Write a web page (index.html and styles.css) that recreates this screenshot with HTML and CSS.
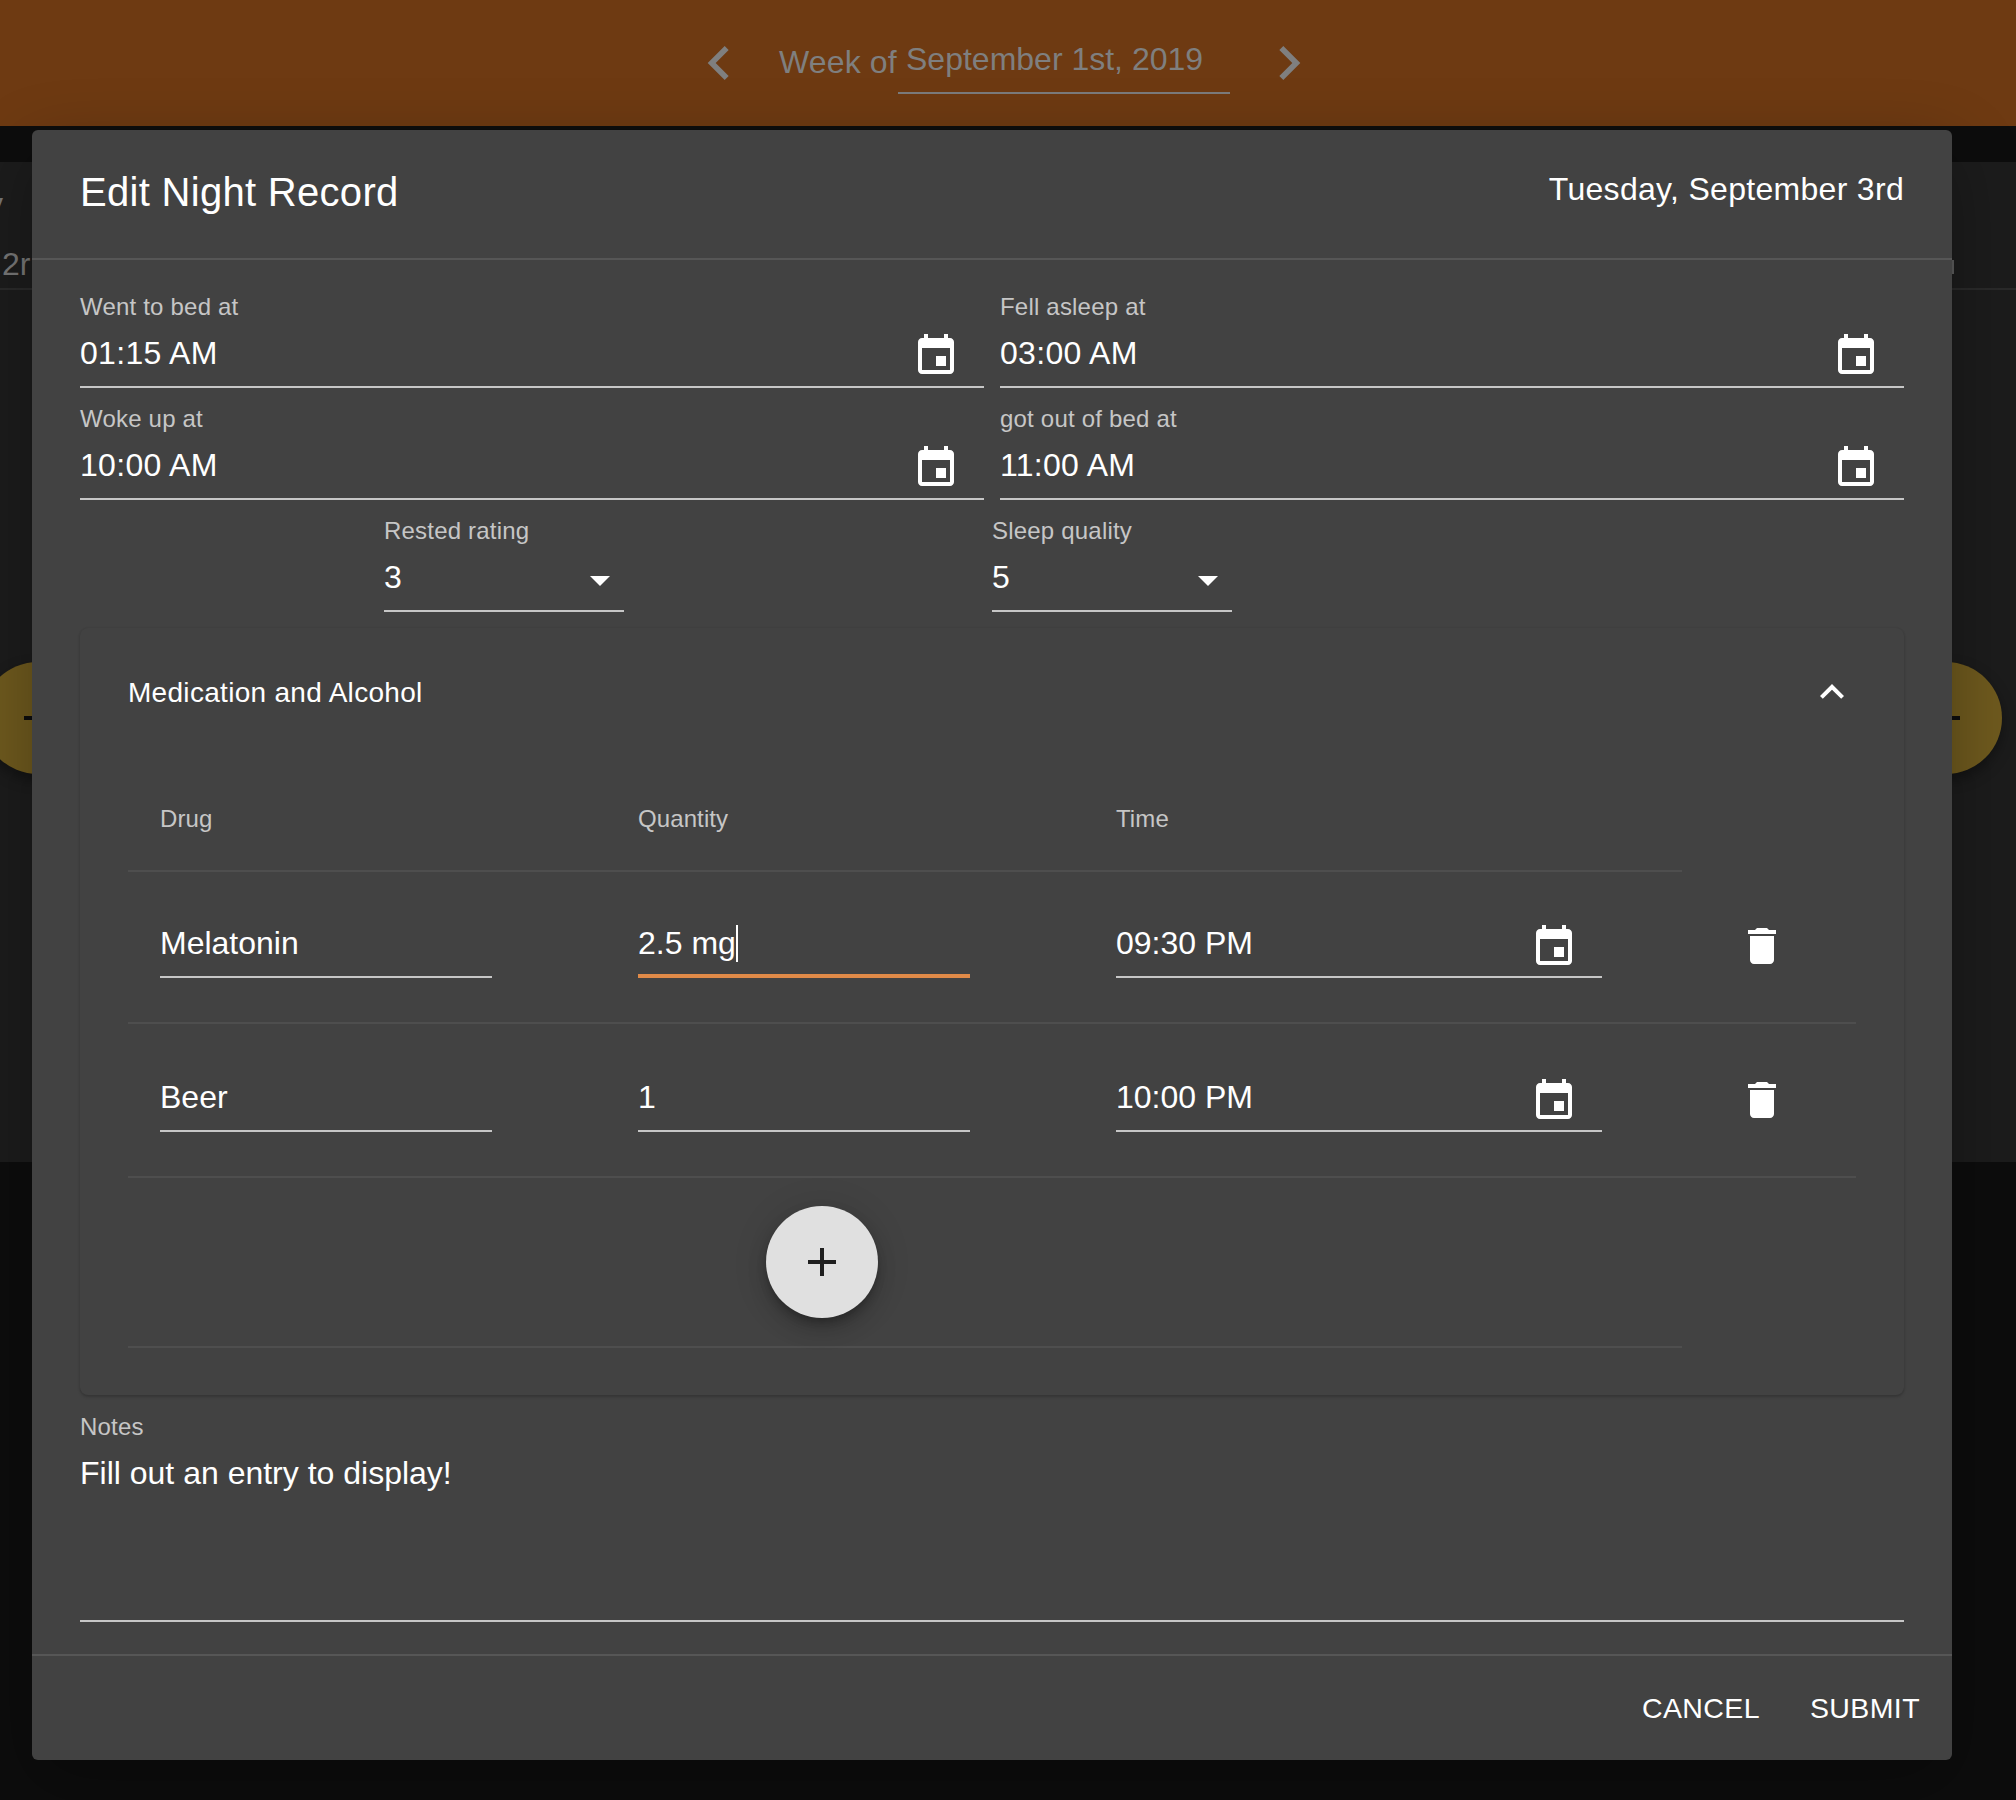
FILE: index.html
```html
<!DOCTYPE html>
<html lang="en">
<head>
<meta charset="utf-8">
<title>Edit Night Record</title>
<link rel="stylesheet" href="styles.css">
</head>
<body>
<svg class="sprite" width="0" height="0" aria-hidden="true">
  <symbol id="i-event" viewBox="0 0 24 24"><path d="M17 12h-5v5h5v-5zM16 1v2H8V1H6v2H5c-1.11 0-1.99.9-1.99 2L3 19c0 1.1.89 2 2 2h14c1.1 0 2-.9 2-2V5c0-1.1-.9-2-2-2h-1V1h-2zm3 18H5V8h14v11z"/></symbol>
  <symbol id="i-delete" viewBox="0 0 24 24"><path d="M6 19c0 1.1.9 2 2 2h8c1.1 0 2-.9 2-2V7H6v12zM19 4h-3.5l-1-1h-5l-1 1H5v2h14V4z"/></symbol>
  <symbol id="i-drop" viewBox="0 0 24 24"><path d="M7 10l5 5 5-5z"/></symbol>
  <symbol id="i-add" viewBox="0 0 24 24"><path d="M19 13h-6v6h-2v-6H5v-2h6V5h2v6h6v2z"/></symbol>
</svg>

<header class="topbar">
  <svg class="nav-icon" viewBox="0 0 24 24"><path d="M15.41 7.41L14 6l-6 6 6 6 1.41-1.41L10.83 12z"/></svg>
  <span class="week-label">Week of</span>
  <span class="week-date">September 1st, 2019</span>
  <svg class="nav-icon" viewBox="0 0 24 24"><path d="M10 6L8.59 7.41 13.17 12l-4.58 4.59L10 18l6-6z"/></svg>
</header>

<main class="backdrop-page">
  <div class="page-panel">
    <span class="page-text page-text-a">y</span>
    <span class="page-text page-text-b">2r</span>
    <span class="page-edge"></span>
    <div class="page-rule"></div>
    <div class="fab-dim fab-left"><span class="fab-dash"></span></div>
    <div class="fab-dim fab-right"><span class="fab-dash"></span></div>
  </div>
</main>

<section class="dialog">
  <div class="dialog-head">
    <h2 class="dialog-title">Edit Night Record</h2>
    <div class="dialog-date">Tuesday, September 3rd</div>
  </div>

  <div class="dialog-body">
    <div class="time-grid">
      <div class="field"><label class="field-label">Went to bed at</label><div class="field-input"><span>01:15 AM</span><svg class="icon"><use href="#i-event"/></svg></div></div>
      <div class="field"><label class="field-label">Fell asleep at</label><div class="field-input"><span>03:00 AM</span><svg class="icon"><use href="#i-event"/></svg></div></div>
      <div class="field"><label class="field-label">Woke up at</label><div class="field-input"><span>10:00 AM</span><svg class="icon"><use href="#i-event"/></svg></div></div>
      <div class="field"><label class="field-label">got out of bed at</label><div class="field-input"><span>11:00 AM</span><svg class="icon"><use href="#i-event"/></svg></div></div>
    </div>

    <div class="rating-row">
      <div class="field select-field rating-a"><label class="field-label">Rested rating</label><div class="field-input select-input"><span>3</span><svg class="icon icon-drop"><use href="#i-drop"/></svg></div></div>
      <div class="field select-field rating-b"><label class="field-label">Sleep quality</label><div class="field-input select-input"><span>5</span><svg class="icon icon-drop"><use href="#i-drop"/></svg></div></div>
    </div>

    <div class="panel">
      <div class="panel-head">
        <span class="panel-title">Medication and Alcohol</span>
        <svg class="icon chevron" viewBox="0 0 24 24"><path d="M12 8l-6 6 1.41 1.41L12 10.83l4.59 4.58L18 14z"/></svg>
      </div>

      <div class="drug-header">
        <span>Drug</span><span>Quantity</span><span>Time</span>
      </div>

      <div class="drug-row drug-row-first">
        <div class="cell-input short"><span>Melatonin</span></div>
        <div class="cell-input short focused"><span>2.5 mg<i class="caret"></i></span></div>
        <div class="cell-input wide"><span>09:30 PM</span><svg class="icon"><use href="#i-event"/></svg></div>
        <svg class="icon"><use href="#i-delete"/></svg>
      </div>
      <div class="drug-row">
        <div class="cell-input short"><span>Beer</span></div>
        <div class="cell-input short"><span>1</span></div>
        <div class="cell-input wide"><span>10:00 PM</span><svg class="icon"><use href="#i-event"/></svg></div>
        <svg class="icon"><use href="#i-delete"/></svg>
      </div>

      <div class="add-row">
        <button class="add-btn" type="button"><svg class="icon icon-add"><use href="#i-add"/></svg></button>
      </div>
    </div>

    <div class="notes">
      <label class="field-label">Notes</label>
      <div class="notes-input">Fill out an entry to display!</div>
    </div>
  </div>

  <div class="dialog-foot">
    <button class="text-btn" type="button">CANCEL</button>
    <button class="text-btn" type="button">SUBMIT</button>
  </div>
</section>
</body>
</html>
```

FILE: styles.css
```css
* { box-sizing: border-box; }
html, body { margin: 0; padding: 0; }
body {
  position: relative;
  width: 2016px;
  height: 1800px;
  overflow: hidden;
  background: #0d0d0d;
  color: #fff;
  font-family: "Liberation Sans", Arial, sans-serif;
}
.sprite { position: absolute; }

/* dimmed page behind the dialog */
.topbar {
  height: 126px;
  background: #6e3a12;
  display: flex;
  align-items: flex-start;
  padding: 29px 0 0 685px;
  color: #7f7f7f;
}
.nav-icon { width: 68px; height: 68px; fill: #7f7f7f; flex: none; }
.week-label {
  margin: 15px 0 0 26px;
  font-size: 32px;
  line-height: 36px;
  letter-spacing: .15px;
  width: 119px;
  flex: none;
  white-space: nowrap;
}
.week-date {
  width: 332px;
  height: 65px;
  flex: none;
  margin-right: 25px;
  padding-left: 8px;
  padding-top: 12px;
  font-size: 32px;
  line-height: 36px;
  border-bottom: 2px solid #7c7c7c;
  white-space: nowrap;
}
.backdrop-page { padding-top: 36px; }
.page-panel {
  position: relative;
  height: 1000px;
  background: #1c1c1c;
}
.page-rule { position: absolute; left: 0; right: 0; top: 126px; height: 2px; background: #2a2a2a; }
.page-text { position: absolute; left: 2px; color: #777; font-size: 32px; line-height: 36px; }
.page-text-a { left: -13px; top: 24px; }
.page-text-b { top: 84px; }
.page-edge { position: absolute; left: 1952px; top: 98px; width: 2px; height: 14px; background: #5d5d5d; }
.fab-dim {
  position: absolute;
  top: 500px;
  width: 112px;
  height: 112px;
  border-radius: 50%;
  background: #6f5a1e;
  box-shadow: 0 6px 14px rgba(0,0,0,.35);
}
.fab-left { left: -18px; }
.fab-right { left: 1890px; }
.fab-dash { position: absolute; left: 42px; top: 54px; width: 28px; height: 4px; background: #0d0d0d; }

/* dialog */
.dialog {
  position: absolute;
  left: 32px;
  top: 130px;
  width: 1920px;
  height: 1630px;
  background: #424242;
  border-radius: 6px;
  display: flex;
  flex-direction: column;
  box-shadow: 0 22px 70px rgba(0,0,0,.3);
}
.dialog-head {
  height: 130px;
  flex: none;
  border-bottom: 2px solid #565656;
  padding: 38px 48px 0;
  display: flex;
  justify-content: space-between;
  align-items: flex-start;
}
.dialog-title { margin: 0; font-size: 40px; line-height: 48px; font-weight: 400; letter-spacing: .3px; }
.dialog-date { font-size: 32px; line-height: 36px; margin-top: 3px; letter-spacing: .3px; }

.dialog-body { flex: 1; padding: 32px 48px 32px; display: flex; flex-direction: column; }
.time-grid { display: grid; grid-template-columns: 904px 904px; column-gap: 16px; row-gap: 16px; }
.field { height: 96px; display: flex; flex-direction: column; }
.field-label { font-size: 24px; line-height: 30px; color: #c6c6c6; letter-spacing: .2px; }
.field-input {
  flex: 1;
  display: flex;
  align-items: center;
  justify-content: space-between;
  border-bottom: 2px solid #c6c6c6;
  padding-right: 24px;
  font-size: 32px;
  line-height: 36px;
  letter-spacing: .3px;
  padding-top: 2px;
  padding-bottom: 4px;
}
.icon { width: 48px; height: 48px; fill: #fff; flex: none; display: block; }
.field-input .icon { margin-top: 3px; margin-bottom: -3px; }

.rating-row { display: flex; margin-top: 16px; padding-left: 304px; }
.select-field { width: 240px; }
.rating-b { margin-left: 368px; }
.select-input { padding-right: 0; }
.field-input .icon-drop { margin-top: 3px; margin-bottom: -3px; }

.panel {
  margin-top: 16px;
  height: 767px;
  background: #424242;
  border-radius: 8px;
  box-shadow: 0 2px 3px rgba(0,0,0,.18), 0 0 2px rgba(0,0,0,.1);
  padding: 0 48px;
  flex: none;
}
.panel-head {
  height: 128px;
  display: flex;
  justify-content: space-between;
  align-items: center;
}
.panel-title { font-size: 28px; line-height: 32px; letter-spacing: .3px; padding-top: 1px; }

.drug-header {
  width: 1554px;
  height: 116px;
  border-bottom: 2px solid #4e4e4e;
  display: grid;
  grid-template-columns: 478px 478px 1fr;
  padding: 49px 0 0 32px;
  font-size: 24px;
  line-height: 28px;
  letter-spacing: .1px;
  color: #c6c6c6;
}
.drug-row {
  width: 1728px;
  height: 154px;
  border-bottom: 2px solid #4e4e4e;
  display: grid;
  grid-template-columns: 478px 478px 622px 48px;
  align-items: end;
  padding: 0 0 44px 32px;
}
.drug-row-first { height: 152px; }
.drug-row > .icon { margin-bottom: 8px; }
.cell-input {
  height: 56px;
  border-bottom: 2px solid #c6c6c6;
  font-size: 32px;
  line-height: 36px;
  display: flex;
  justify-content: space-between;
  align-items: center;
  padding-bottom: 13px;
}
.cell-input .icon { margin-right: 24px; margin-top: 8px; }
.short { width: 332px; }
.wide { width: 486px; }
.focused { border-bottom: 4px solid #e08a48; padding-bottom: 9px; }
.caret { display: inline-block; width: 2px; height: 37px; background: #fff; vertical-align: -8px; margin-left: 0; }

.add-row {
  width: 1554px;
  height: 170px;
  border-bottom: 2px solid #4e4e4e;
  padding: 28px 0 0 638px;
}
.add-btn {
  width: 112px;
  height: 112px;
  border: 0;
  padding: 0;
  border-radius: 50%;
  background: #e0e0e0;
  display: flex;
  align-items: center;
  justify-content: center;
  box-shadow: 0 6px 10px -2px rgba(0,0,0,.25), 0 12px 20px 0 rgba(0,0,0,.14), 0 2px 36px 0 rgba(0,0,0,.12);
}
.icon-add { fill: #1f1f1f; }

.notes { margin-top: 18px; flex: 1; display: flex; flex-direction: column; }
.notes .field-label { line-height: 28px; }
.notes-input {
  flex: 1;
  margin-top: 8px;
  font-size: 32px;
  line-height: 36px;
  border-bottom: 2px solid #c6c6c6;
  padding-top: 6px;
}

.dialog-foot {
  height: 106px;
  flex: none;
  border-top: 2px solid #565656;
  display: flex;
  justify-content: flex-end;
  align-items: center;
  gap: 50px;
  padding-right: 32px;
}
.text-btn {
  background: none;
  border: 0;
  padding: 0;
  color: #fff;
  font-family: inherit;
  font-size: 28.5px;
  line-height: 36px;
  letter-spacing: .4px;
}
```
